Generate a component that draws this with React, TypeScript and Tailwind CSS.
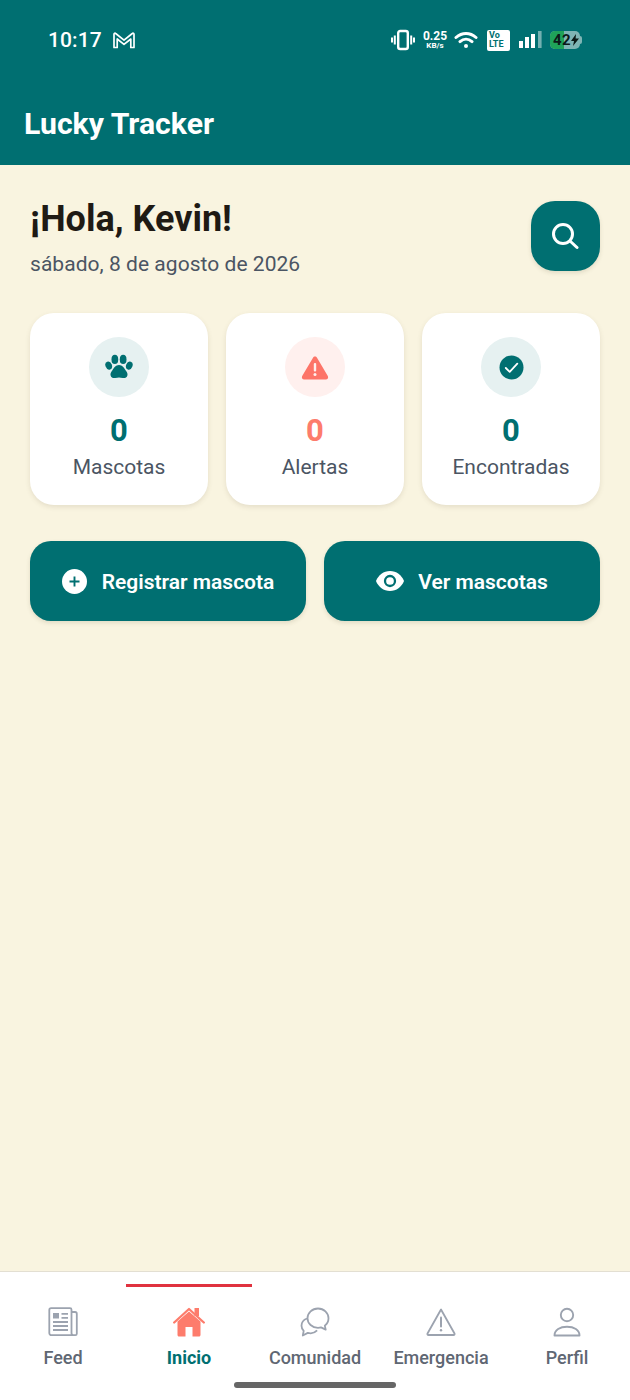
import { ReactNode } from "react";

const font = { fontFamily: "Roboto, sans-serif" };

function Vibrate() {
  return (
    <svg width="24" height="22" viewBox="0 0 24 22" fill="none" stroke="white">
      <rect x="7.2" y="2" width="9.6" height="18" rx="2" strokeWidth="2.4" />
      <path d="M3.8 6.5v9M1 8.5v5M20.2 6.5v9M23 8.5v5" strokeWidth="2" />
    </svg>
  );
}

function StatusBar() {
  return (
    <div className="flex h-[80px] items-center justify-between pl-[48px] pr-[48px] pt-0 text-white">
      <div className="flex items-center gap-[11px]">
        <span className="text-[21px] font-medium leading-none tracking-[0.1px]">10:17</span>
        <svg width="22" height="17" viewBox="0 0 22 17" fill="none" stroke="white" strokeWidth="1.7" strokeLinejoin="round">
          <path d="M1 15.5V2.2c0-.9 1-1.3 1.7-.7L11 8.2l8.3-6.7c.7-.6 1.700-.2 1.700.7v13.300h-3.200V7L11 12.400 4.200 7v8.500z" />
        </svg>
      </div>
      <div className="flex items-center">
        <Vibrate />
        <div className="ml-[7px] flex w-[26px] flex-col items-center font-bold leading-none">
          <span className="text-[12px]">0.25</span>
          <span className="text-[8px]">KB/s</span>
        </div>
        <svg className="ml-[6px]" width="24" height="18" viewBox="0 0 24 18" fill="none" stroke="white" strokeWidth="3" strokeLinecap="round">
          <path d="M2 6.500c6-5.400 14-5.400 20 0M6 10.600c3.700-3.200 8.300-3.200 12 0" />
          <circle cx="12" cy="15" r="2" fill="white" stroke="none" />
        </svg>
        <div className="ml-[9px] flex h-[21px] w-[23px] flex-col justify-center rounded-[2px] bg-white pl-[2px] text-[9px] font-bold leading-[9px] text-[#00706f]">
          <span>Vo</span>
          <span>LTE</span>
        </div>
        <svg className="ml-[9px]" width="23" height="18" viewBox="0 0 23 18">
          <rect x="0" y="10" width="4" height="7" fill="white" />
          <rect x="6" y="6" width="4" height="11" fill="white" />
          <rect x="12" y="3" width="4" height="14" fill="white" />
          <rect x="19" y="0" width="3.600" height="17" fill="white" fillOpacity="0.45" />
        </svg>
        <div className="relative ml-[8px] h-[18px] w-[30px] overflow-hidden rounded-[5px] bg-[#7fb5b5]">
          <div className="h-full w-[14px] bg-[#1fa35a]" />
          <span className="absolute left-[3px] top-[1px] text-[15px] font-bold leading-[17px] tracking-[0.4px] text-[#0c1a18]">42</span>
          <svg className="absolute right-[1px] top-[3px]" width="8" height="12" viewBox="0 0 8 12">
            <path d="M5 0 0 7h3l-1 5 6-7.500H4.600z" fill="#0c1a18" />
          </svg>
        </div>
        <div className="h-[8px] w-[2px] rounded-r-sm bg-[#7fb5b5]" />
      </div>
    </div>
  );
}

function StatCard({ icon, tint, value, valueColor, label }: { icon: ReactNode; tint: string; value: string; valueColor: string; label: string }) {
  return (
    <div className="flex h-[192px] flex-1 flex-col items-center rounded-[24px] bg-white pt-[24px] shadow-[0_2px_5px_rgba(90,80,50,0.13)]">
      <div className={`flex h-[60px] w-[60px] items-center justify-center rounded-full ${tint}`}>{icon}</div>
      <div className={`mt-[16px] text-[31px] font-bold leading-[36px] ${valueColor}`}>{value}</div>
      <div className="text-[21px] leading-[36px] text-[#4b5563]">{label}</div>
    </div>
  );
}

function ActionButton({ icon, label, gap }: { icon: ReactNode; label: string; gap: string }) {
  return (
    <div className={`flex h-[80px] flex-1 items-center justify-center rounded-[21px] bg-[#006f71] shadow-[0_2px_4px_rgba(90,80,50,0.15)] ${gap}`}>
      {icon}
      <span className="pt-[2px] text-[21px] font-semibold leading-none text-white">{label}</span>
    </div>
  );
}

function NavItem({ icon, label, active }: { icon: ReactNode; label: string; active?: boolean }) {
  return (
    <div className="relative flex w-[126px] flex-col items-center pt-[34px]">
      {active && <div className="absolute left-0 top-[12px] h-[3px] w-[126px] bg-[#e0323f]" />}
      <div className="flex h-[32px] w-[34px] items-center justify-center">{icon}</div>
      <div className={`mt-[8px] whitespace-nowrap text-[18px] leading-[24px] ${active ? "font-bold text-[#006f71]" : "font-medium text-[#5f6773]"}`}>
        {label}
      </div>
    </div>
  );
}

export default function App() {
  return (
    <div className="relative flex h-[1400px] w-[630px] flex-col overflow-hidden bg-[#f9f4e0]" style={font}>
      <div className="h-[165px] bg-[#006f71]">
        <StatusBar />
        <div className="pl-[24px] pt-[24px] text-[30.2px] font-bold leading-[40px] text-white">Lucky Tracker</div>
      </div>

      {/* contenido */}
      <div className="flex-1 px-[30px] pt-[36px]">
        <div className="flex items-start justify-between">
          <div>
            <h1 className="text-[36px] font-bold leading-[36px] text-[#1f1a14]">¡Hola, Kevin!</h1>
            <p className="mt-[12px] text-[21px] leading-[30px] tracking-[0.04px] text-[#4b5563]">sábado, 8 de agosto de 2026</p>
          </div>
          <div className="flex h-[70px] w-[69px] items-center justify-center rounded-[24px] bg-[#006f71] pr-[2px] shadow-[0_2px_4px_rgba(90,80,50,0.15)]">
            <svg width="28" height="28" viewBox="0 0 28 28" fill="none" stroke="white" strokeWidth="3" strokeLinecap="round">
              <circle cx="12" cy="12" r="9.500" />
              <path d="m19 19 7 6.500" />
            </svg>
          </div>
        </div>

        <div className="mt-[34px] flex gap-[18px]">
          <StatCard
            tint="bg-[#e6f1f1]"
            value="0"
            valueColor="text-[#006f71]"
            label="Mascotas"
            icon={
              <svg width="28" height="26" viewBox="0 0 29 27" fill="#006f71">
                <ellipse cx="10.200" cy="5.600" rx="3.500" ry="4.800" />
                <ellipse cx="18.800" cy="5.600" rx="3.500" ry="4.800" />
                <ellipse cx="3.800" cy="12" rx="3.300" ry="4.300" transform="rotate(-22 3.800 12)" />
                <ellipse cx="25.200" cy="12" rx="3.300" ry="4.300" transform="rotate(22 25.200 12)" />
                <path d="M14.500 11.500c-3.400 0-5.200 3-7 5.600-1.400 2-2.200 3.400-1.700 5.200.6 2.200 2.800 3.100 4.800 2.600 1.400-.3 2.700-.6 3.900-.6s2.500.3 3.900.6c2 .5 4.200-.4 4.800-2.600.5-1.800-.3-3.200-1.700-5.200-1.800-2.600-3.600-5.600-7-5.600z" />
              </svg>
            }
          />
          <StatCard
            tint="bg-[#fff0ee]"
            value="0"
            valueColor="text-[#fd7c6c]"
            label="Alertas"
            icon={
              <svg width="28" height="25" viewBox="0 0 28 25">
                <path d="M14 1.500c-.9 0-1.600.5-2 1.200L1.200 20.900c-.9 1.600.2 3.600 2 3.600h21.600c1.800 0 2.900-2 2-3.600L16 2.700c-.4-.7-1.100-1.200-2-1.200z" fill="#fd7468" />
                <rect x="12.800" y="8" width="2.400" height="8.500" rx="1" fill="#fff0ee" />
                <circle cx="14" cy="19.600" r="1.500" fill="#fff0ee" />
              </svg>
            }
          />
          <StatCard
            tint="bg-[#e6f1f1]"
            value="0"
            valueColor="text-[#006f71]"
            label="Encontradas"
            icon={
              <svg width="25" height="25" viewBox="0 0 25 25" fill="none">
                <circle cx="12.500" cy="12.500" r="12" fill="#006f71" />
                <path d="m6.800 13 3.900 3.900 7.600-8.200" stroke="white" strokeWidth="1.800" strokeLinecap="round" strokeLinejoin="round" />
              </svg>
            }
          />
        </div>

        <div className="mt-[36px] flex gap-[18px]">
          <ActionButton
            gap="gap-[15px]"
            label="Registrar mascota"
            icon={
              <svg width="25" height="25" viewBox="0 0 25 25" fill="none">
                <circle cx="12.500" cy="12.500" r="12.500" fill="white" />
                <path d="M12.500 7.500v10M7.500 12.500h10" stroke="#006f71" strokeWidth="1.900" />
              </svg>
            }
          />
          <ActionButton
            gap="gap-[14px]"
            label="Ver mascotas"
            icon={
              <svg width="28" height="20" viewBox="0 0 28 20">
                <path d="M14 0C7.600 0 2.400 4 0 10c2.400 6 7.600 10 14 10s11.600-4 14-10C25.600 4 20.400 0 14 0z" fill="white" />
                <circle cx="14" cy="10" r="5" fill="none" stroke="#006f71" strokeWidth="2.300" />
              </svg>
            }
          />
        </div>
      </div>

      {/* barra inferior */}
      <div className="flex h-[129px] border-t border-[#e3dfd2] bg-white">
        <NavItem
          label="Feed"
          icon={
            <svg width="30" height="30" viewBox="0 0 30 30" fill="none" stroke="#9ca3af" strokeWidth="1.800">
              <path d="M23.500 5H27c1 0 1.800.8 1.800 1.800v20c0 .8-.7 1.400-1.500 1.400H3.500c-1.200 0-2.200-1-2.200-2.200V3c0-1 .8-1.800 1.800-1.800H22c.8 0 1.500.7 1.500 1.500V26c0 1.200.9 2.200 2 2.200" />
              <rect x="5" y="6" width="6" height="5.500" fill="#9ca3af" stroke="none" />
              <path d="M13.500 6.800h6.500M13.500 10.800h6.500M5 15h15M5 19h15M5 23h15" />
            </svg>
          }
        />
        <NavItem
          active
          label="Inicio"
          icon={
            <svg width="32" height="30" viewBox="0 0 32 30" fill="none">
              <path d="M4.500 14.500 16 4.500l11.500 10V28c0 .8-.7 1.500-1.500 1.500h-6.500V20h-7v9.500H6c-.8 0-1.500-.7-1.500-1.500z" fill="#fd7c6c" />
              <path d="M1.200 15.500 16 2l14.800 13.500" stroke="#fd7c6c" strokeWidth="2.300" strokeLinecap="round" strokeLinejoin="round" />
              <rect x="21.500" y="1" width="4.500" height="8" fill="#fd7c6c" />
            </svg>
          }
        />
        <NavItem
          label="Comunidad"
          icon={
            <svg width="30" height="30" viewBox="0 0 30 30" fill="none" stroke="#9ca3af" strokeWidth="1.800" strokeLinejoin="round">
              <path d="M18 1.500c5.800 0 10.500 4.300 10.500 9.700 0 3-1.400 5.600-3.700 7.400l.9 4-4.700-2.200c-1 .3-2 .4-3 .4-5.800 0-10.500-4.200-10.500-9.600S12.200 1.500 18 1.500z" />
              <path d="M7 11.500c-3.400 1.300-5.500 4-5.500 7.200 0 2 .8 3.700 2.200 5.100l-.9 4.700 5-2.600c3.300.9 7-.1 9.300-2.500" />
            </svg>
          }
        />
        <NavItem
          label="Emergencia"
          icon={
            <svg width="30" height="28" viewBox="0 0 30 28" fill="none" stroke="#9ca3af" strokeWidth="1.800" strokeLinejoin="round">
              <path d="M15 1.500 1.500 25.500c-.4.800.1 1.500.9 1.500h25.200c.8 0 1.300-.7.9-1.500z" />
              <path d="M15 9.500v9" strokeWidth="2" strokeLinecap="round" />
              <circle cx="15" cy="22.300" r="1.200" fill="#9ca3af" stroke="none" />
            </svg>
          }
        />
        <NavItem
          label="Perfil"
          icon={
            <svg width="28" height="30" viewBox="0 0 28 30" fill="none" stroke="#9ca3af" strokeWidth="1.900">
              <circle cx="14" cy="8" r="6.200" />
              <path d="M1.500 28.500c0-5.500 5.500-8.800 12.500-8.800s12.500 3.300 12.500 8.800z" strokeLinejoin="round" />
            </svg>
          }
        />
      </div>

      <div className="absolute bottom-[12px] left-[234px] h-[6px] w-[162px] rounded-full bg-[#666666]" />
    </div>
  );
}
